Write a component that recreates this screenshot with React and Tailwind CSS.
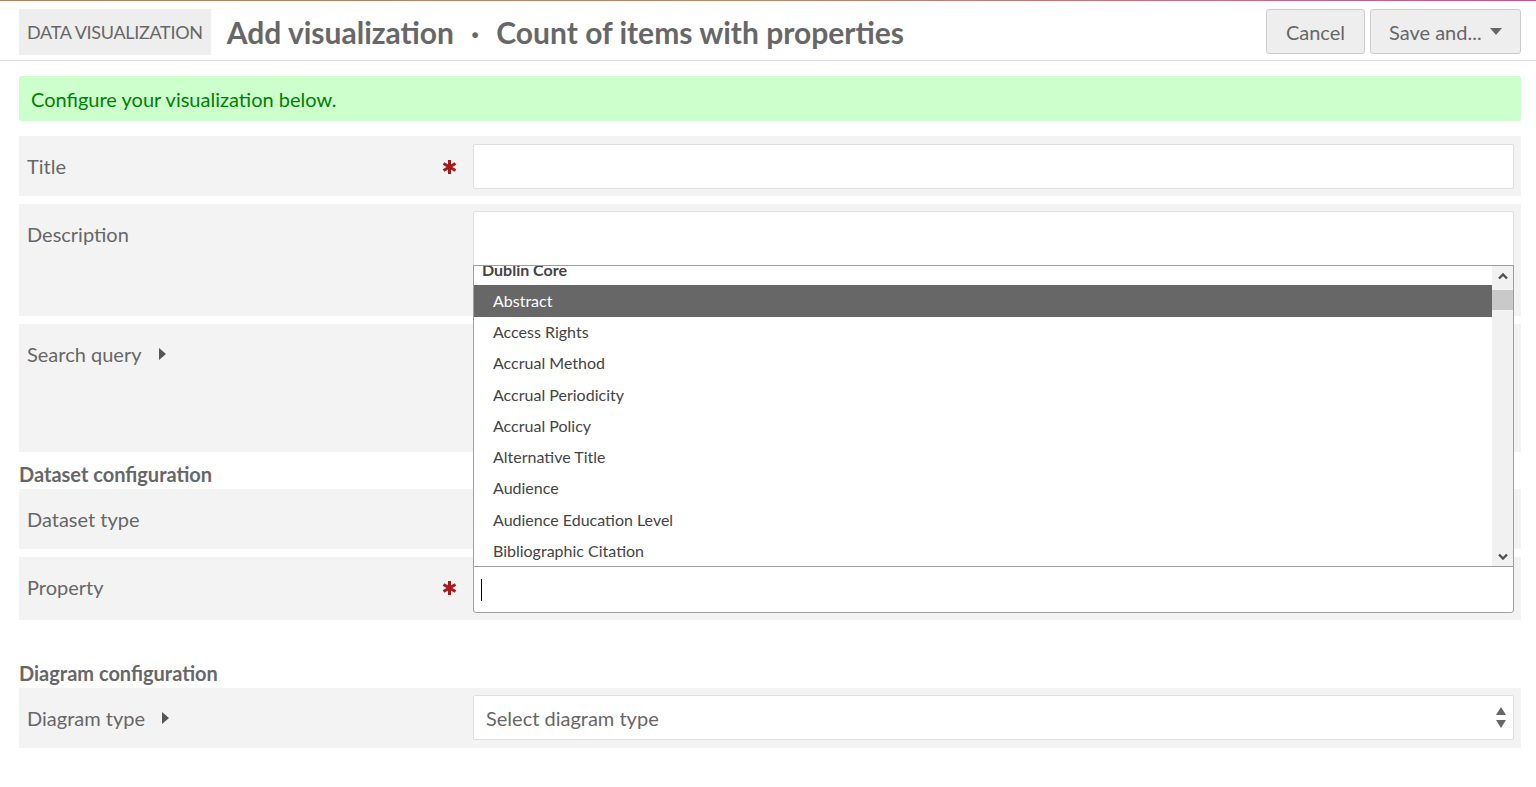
import React from 'react';

const font = { fontFamily: 'Lato, "Noto Sans", sans-serif' };

const items = [
  'Abstract',
  'Access Rights',
  'Accrual Method',
  'Accrual Periodicity',
  'Accrual Policy',
  'Alternative Title',
  'Audience',
  'Audience Education Level',
  'Bibliographic Citation',
];

function Asterisk() {
  return (
    <svg width="15" height="16" viewBox="0 0 15 16" className="shrink-0">
      <g stroke="#a91919" strokeWidth="3">
        <line x1="7.5" y1="1" x2="7.5" y2="15" />
        <line x1="1.5" y1="4.5" x2="13.5" y2="11.5" />
        <line x1="1.5" y1="11.5" x2="13.5" y2="4.5" />
      </g>
    </svg>
  );
}

function Caret() {
  return (
    <svg width="7" height="12" viewBox="0 0 7 12" className="shrink-0">
      <polygon points="0,0 7,6 0,12" fill="#555" />
    </svg>
  );
}

function Chevron({ down }) {
  return (
    <svg width="10" height="7" viewBox="0 0 10 7">
      <polyline
        points={down ? '1,1.5 5,5.5 9,1.5' : '1,5.5 5,1.5 9,5.5'}
        fill="none"
        stroke="#505050"
        strokeWidth="2.4"
      />
    </svg>
  );
}

function Row({ label, required, caret, className = '', rightClass = 'pt-[8px] pb-[7px]', children }) {
  return (
    <div className={`flex bg-[#f3f3f3] ${className}`}>
      <div className="w-[454px] shrink-0 flex items-start justify-between pl-[8px] pr-[16px] pt-[15px]">
        <span className="flex items-center gap-[17px] text-[20px] leading-[30px] text-[#676767]">
          {label}
          {caret && <Caret />}
        </span>
        {required && (
          <span className="h-[32px] flex items-center">
            <Asterisk />
          </span>
        )}
      </div>
      <div className={`flex-1 pr-[7px] ${rightClass}`}>{children}</div>
    </div>
  );
}

function PropertyDropdown() {
  return (
    <div className="absolute bottom-full left-0 right-0 h-[301px] z-10 flex bg-white border border-b-0 border-[#a0a0a0] overflow-hidden">
      <div className="flex-1 overflow-hidden">
        <div className="-mt-[12px]">
          <div className="h-[31.25px] pl-[8px] flex items-center font-bold text-[16px] text-[#444]">
            Dublin Core
          </div>
          {items.map((it, i) => (
            <div
              key={it}
              className={`h-[31.25px] pl-[19px] flex items-center text-[16px] ${
                i === 0 ? 'bg-[#676767] text-white' : 'text-[#444]'
              }`}
            >
              {it}
            </div>
          ))}
        </div>
      </div>
      <div className="w-[21px] shrink-0 bg-[#f1f1f1] flex flex-col">
        <div className="h-[20px] flex items-center justify-center">
          <Chevron />
        </div>
        <div className="mt-[4px] h-[20px] bg-[#c9c9c9]" />
        <div className="flex-1" />
        <div className="h-[20px] flex items-center justify-center">
          <Chevron down />
        </div>
      </div>
    </div>
  );
}

export default function App() {
  return (
    <div className="min-h-screen bg-white text-[#676767]" style={font}>
      <div className="h-[1px] bg-gradient-to-r from-[#a9805f] via-[#b8886a] to-[#cf4f8c]" />
      <header className="h-[60px] border-b border-[#dddddd] flex items-start pl-[19px] pr-[15px] pt-[8px]">
        <div className="h-[46px] px-[8px] bg-[#eeeeee] flex items-center text-[18px] uppercase tracking-[-0.3px] text-[#676767]">
          Data Visualization
        </div>
        <h1 className="ml-[16px] h-[46px] flex items-center text-[30px] font-bold text-[#676767] whitespace-nowrap">
          Add visualization
          <span className="mx-[17px]">·</span>
          Count of items with properties
        </h1>
        <div className="ml-auto flex gap-[5px]">
          <button className="h-[45px] px-[19px] bg-[#eeeeee] border border-[#cccccc] rounded-[3px] text-[20px] text-[#676767]">
            Cancel
          </button>
          <button className="h-[45px] w-[151px] pl-[18px] pr-[18px] bg-[#eeeeee] border border-[#cccccc] rounded-[3px] text-[20px] text-[#676767] flex items-center gap-[8px]">
            Save and...
            <svg width="12" height="7" viewBox="0 0 12 7">
              <polygon points="0,0 12,0 6,7" fill="#676767" />
            </svg>
          </button>
        </div>
      </header>

      <main className="pl-[19px] pr-[15px] pt-[15px]">
        <div className="h-[45px] rounded-[3px] bg-[#ccffcc] flex items-center pl-[12px] text-[20px] text-[#008000]">
          Configure your visualization below.
        </div>

        <Row label="Title" required className="mt-[15px]">
          <div className="h-[45px] bg-white border border-[#dfdfdf] rounded-[2px]" />
        </Row>

        <Row label="Description" className="mt-[8px] h-[112px]" rightClass="pt-[7px]">
          <div className="h-[98px] bg-white border border-[#dfdfdf] rounded-[2px]" />
        </Row>

        <Row label="Search query" caret className="mt-[8px] h-[128px]">
          <div />
        </Row>

        <h3 className="mt-[7px] h-[30px] flex items-center text-[20px] font-bold text-[#676767]">
          Dataset configuration
        </h3>

        <Row label="Dataset type" className="h-[60px]">
          <div className="h-[45px] bg-white border border-[#dfdfdf] rounded-[2px]" />
        </Row>

        <Row label="Property" required className="mt-[8px] h-[63px]" rightClass="pt-[9px]">
          <div className="relative">
            <PropertyDropdown />
            <div className="h-[47px] bg-white border border-[#a0a0a0] rounded-b-[3px] flex items-center pl-[7px]">
              <span className="w-[1px] h-[22px] bg-black" />
            </div>
          </div>
        </Row>

        <h3 className="mt-[38px] h-[30px] flex items-center text-[20px] font-bold text-[#676767]">
          Diagram configuration
        </h3>

        <Row label="Diagram type" caret className="h-[60px]" rightClass="pt-[7px]">
          <div className="h-[45px] bg-white border border-[#dfdfdf] rounded-[2px] flex items-center justify-between pl-[12px] pr-[7px] text-[20px] text-[#676767]">
            Select diagram type
            <svg width="10" height="22" viewBox="0 0 10 22">
              <polygon points="5,0 10,8 0,8" fill="#676767" />
              <polygon points="0,13 10,13 5,21" fill="#676767" />
            </svg>
          </div>
        </Row>
      </main>
    </div>
  );
}
